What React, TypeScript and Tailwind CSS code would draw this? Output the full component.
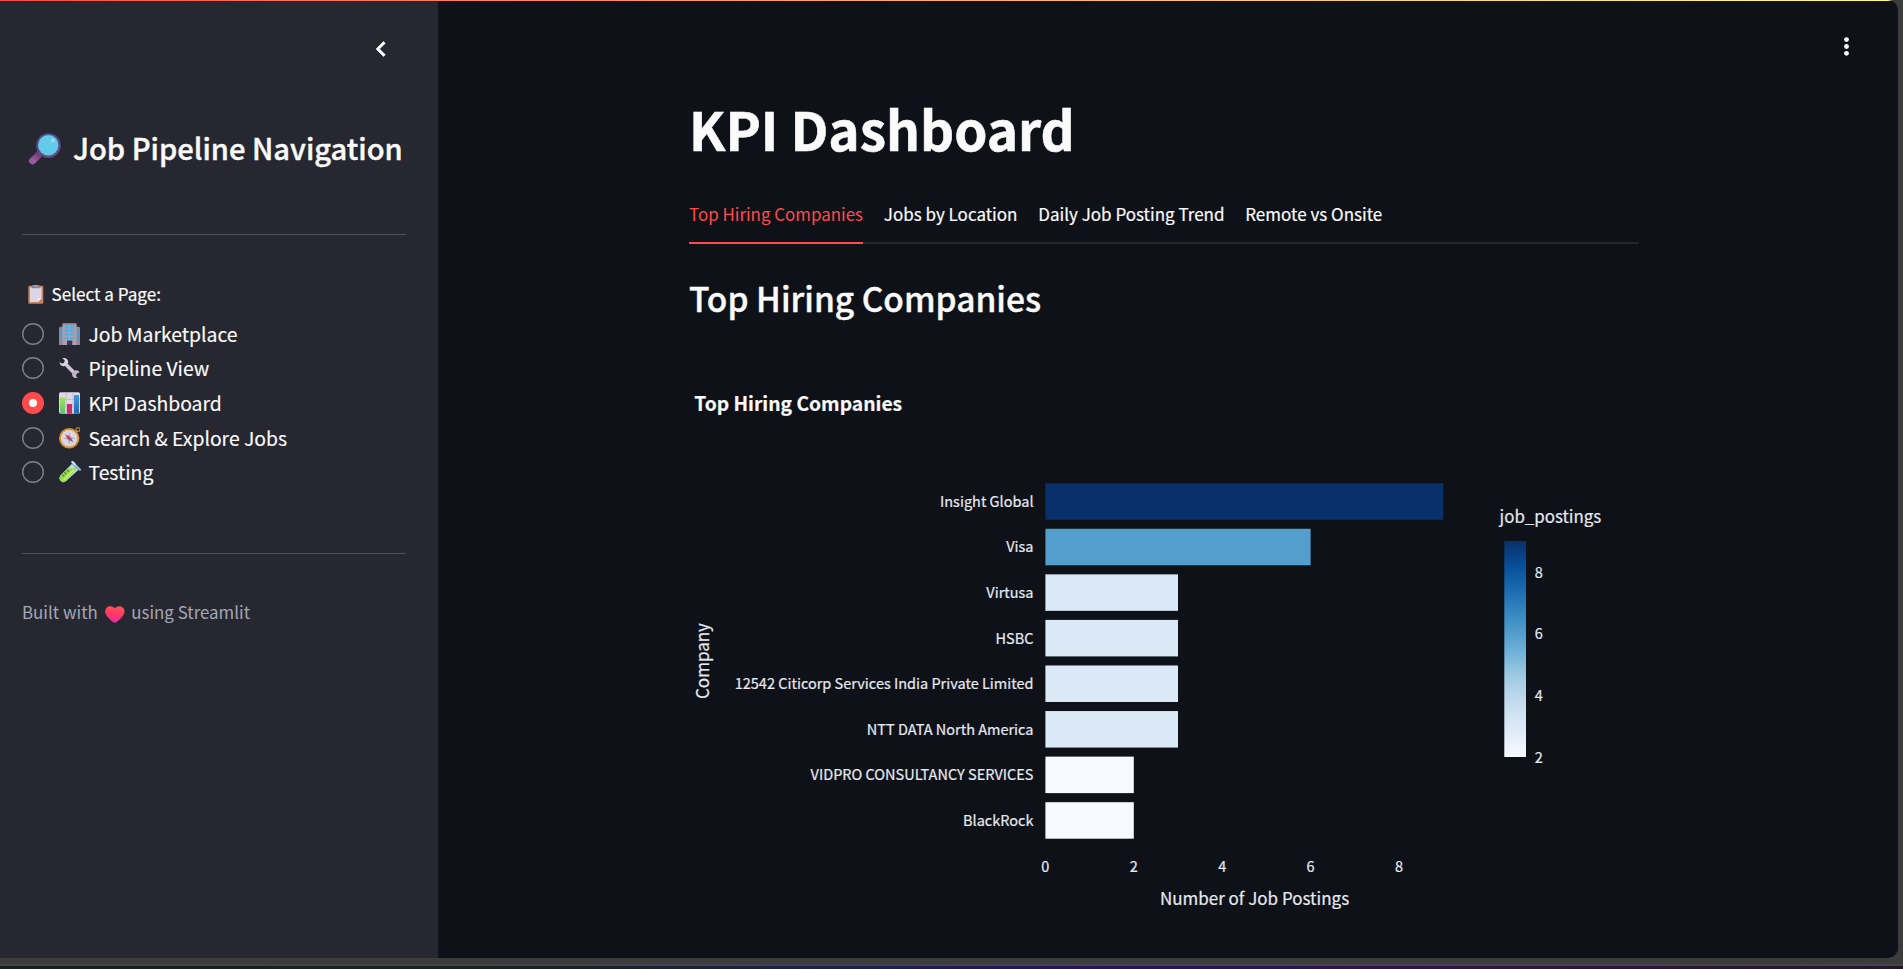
import type { ReactNode } from "react";

/* ---------- Icons ---------- */

function MagnifierIcon() {
  return (
    <svg viewBox="0 0 32 32" className="size-8 shrink-0">
      <defs>
        <linearGradient id="rim" x1="0" y1="0" x2="0" y2="1">
          <stop offset="0" stopColor="#3f5590" />
          <stop offset="1" stopColor="#6d4583" />
        </linearGradient>
        <linearGradient id="handle" x1="0.8" y1="0" x2="0.3" y2="1">
          <stop offset="0" stopColor="#6f3f78" />
          <stop offset="1" stopColor="#9a5b9d" />
        </linearGradient>
      </defs>
      <path d="M10.3 21.2 3.6 27.9" stroke="url(#handle)" strokeWidth="7" strokeLinecap="round" />
      <circle cx="19.5" cy="12.5" r="12.3" fill="url(#rim)" />
      <circle cx="19.3" cy="12.3" r="10.2" fill="#62cbe9" />
      <circle cx="23.8" cy="7.5" r="1.9" fill="#a9d4f0" />
    </svg>
  );
}

function ClipboardIcon() {
  return (
    <svg viewBox="0 0 16 19" className="h-[19px] w-4 shrink-0">
      <rect x="0.3" y="0.8" width="15" height="18" rx="1.2" fill="#c9835c" />
      <path d="M2 2.6h11.6v10.6l-3.8 3.9H2z" fill="#dcd5e6" />
      <path d="M9.8 17.1v-3.2q0-.7.7-.7h3.1z" fill="#f3eef8" />
      <path d="M4 .8Q4 0 5 0h5.6q1 0 1 .8v2.4H4z" fill="#8a7f93" />
      <rect x="5.6" y="0.2" width="4.4" height="1.4" fill="#b0a5ba" />
    </svg>
  );
}

function OfficeIcon() {
  return (
    <svg viewBox="0 0 21 22" className="h-[22px] w-[21px] shrink-0">
      <path d="M0 5.2q0-1.5 1.5-1.5H5V22H0zM16 3.7h3.5Q21 3.7 21 5.200V22H16z" fill="#8f8a9b" />
      <path d="M3.4 1.6Q3.4 0 5 0h11q1.6 0 1.6 1.6V22H3.4z" fill="#a7a1b1" />
      <path d="M3.4 1.6Q3.4 0 5 0h11q1.6 0 1.6 1.6z" fill="#827b8c" />
      <path
        d="M5.7 2.8h4v2.400h-4zM11 2.800h4v2.400h-4zM5.700 6.500h4v2.400h-4zM11 6.500h4v2.400h-4zM5.700 10.200h4v2.400h-4zM11 10.200h4v2.400h-4zM5.700 13.900h4v2.400h-4zM11 13.900h4v2.400h-4z"
        fill="#3fb4f5"
      />
      <path
        d="M1 6.800h1.900v2.200H1zM1 10.400h1.900v2.200H1zM1 14h1.900v2.200H1zM18.200 6.800h1.900v2.200h-1.900zM18.200 10.400h1.900v2.200h-1.900zM18.200 14h1.900v2.200h-1.900z"
        fill="#35a5e6"
      />
      <path d="M8 17.600h5.200V22H8z" fill="#43354f" />
    </svg>
  );
}

function WrenchIcon() {
  return (
    <svg viewBox="0 0 21 22" className="h-[22px] w-[21px] shrink-0">
      <path d="M6.500 7 14.600 15.200" stroke="#cfc5d8" strokeWidth="3.700" />
      <path
        d="M3.400 1.200 5.800 3.600 4.900 6 2.300 6.600.6 4.700C.4 8 2.800 9.800 6 9.100L9.200 6C9.600 3 7.400.4 3.400 1.200Z"
        fill="#d9d0e0"
      />
      <path
        d="M20.400 15.800 18.700 16 17 17.700l.4 2 1.200 1.100c-3.200.8-6-1-5.500-4.300l2.700-3.100c2.300-.5 4.300.2 4.600 2.400Z"
        fill="#bfb5ca"
      />
    </svg>
  );
}

function BarChartIcon() {
  return (
    <svg viewBox="0 0 21 22" className="h-[22px] w-[21px] shrink-0">
      <defs>
        <linearGradient id="barGreen" x1="0" y1="0" x2="0" y2="1">
          <stop offset="0" stopColor="#a8e05d" />
          <stop offset="1" stopColor="#5cc277" />
        </linearGradient>
        <linearGradient id="barBlue" x1="0" y1="0" x2="0" y2="1">
          <stop offset="0" stopColor="#3c9ae6" />
          <stop offset="1" stopColor="#2568b8" />
        </linearGradient>
      </defs>
      <rect y="0.300" width="21" height="21.400" rx="1.600" fill="#dfdae6" />
      <path d="M7.200 0v22M14 0v22M0 7.400h21M0 14.600h21" stroke="#b8b0c3" strokeWidth="0.700" />
      <rect x="1" y="5.400" width="5" height="16.300" fill="url(#barGreen)" />
      <rect x="8" y="12" width="5" height="9.700" fill="#d22b68" />
      <rect x="15" y="3" width="5" height="18.700" fill="url(#barBlue)" />
    </svg>
  );
}

function CompassIcon() {
  return (
    <svg viewBox="0 0 21 22" className="h-[22px] w-[21px] shrink-0">
      <circle cx="18.900" cy="2.600" r="1.900" fill="none" stroke="#b87e28" strokeWidth="1.200" />
      <path d="m15.600 6 2.400-2.400" stroke="#d99a2e" strokeWidth="2" />
      <circle cx="10.200" cy="11.300" r="10.200" fill="#d4922d" />
      <circle cx="10.200" cy="11.300" r="8.300" fill="#ddd5e2" />
      <path d="m10.200 4.900 1.100 5.300 5.300 1.100-5.300 1.100-1.100 5.300-1.100-5.300-5.300-1.100 5.300-1.100z" fill="#aaa1b3" />
      <path d="m6 7.300 5.400 2.600-2.300 2.500z" fill="#dc2e62" />
      <path d="m14.600 15.400-5.500-3 2.300-2.500z" fill="#6f6878" />
    </svg>
  );
}

function TestTubeIcon() {
  return (
    <svg viewBox="0 0 22 22" className="h-[22px] w-[22px] shrink-0">
      <path d="M13 2.800 19.300 9 7.200 20.100Q4.600 22.400 1.700 20 -.6 17.200 1.700 14.300Z" fill="#b9dcf0" />
      <path d="M9 7.300h9L7.200 20.100Q4.600 22.400 1.700 20 -.6 17.200 1.700 14.300Z" fill="#98d94c" />
      <path d="M14.200 9.400 5 18.600" stroke="#c4ef72" strokeWidth="2" strokeLinecap="round" />
      <path d="m5.300 11.300 2 1.900M3.200 13.500l2 1.900M8 9l2 1.900" stroke="#3d8f3c" strokeWidth="1.200" />
      <path d="M13.300 1.100 20.900 8.700" stroke="#8fc3e8" strokeWidth="2.200" strokeLinecap="round" />
      <path d="M13.600.9 16 3.300" stroke="#c9e6f8" strokeWidth="1.800" strokeLinecap="round" />
    </svg>
  );
}

function HeartIcon() {
  return (
    <svg viewBox="0 0 20 17" className="h-[17px] w-5 shrink-0">
      <defs>
        <linearGradient id="heart" x1="0.600" y1="0" x2="0.400" y2="1">
          <stop offset="0" stopColor="#ff5355" />
          <stop offset="0.550" stopColor="#fb3668" />
          <stop offset="1" stopColor="#ee2bb0" />
        </linearGradient>
      </defs>
      <path
        d="M9.800 2.200C7.700-.4 3.400-.5 1.300 1.900-.6 4.200-.1 7.500 1.700 10c1.900 2.600 4.500 4.600 6.700 6.200q1.400.9 2.800 0c2.200-1.600 4.800-3.600 6.700-6.200 1.800-2.500 2.300-5.800.4-8.100-2.100-2.400-6.400-2.300-8.500.3Z"
        fill="url(#heart)"
      />
    </svg>
  );
}

/* ---------- Sidebar ---------- */

const pages: { label: string; icon: ReactNode; selected?: boolean }[] = [
  { label: "Job Marketplace", icon: <OfficeIcon /> },
  { label: "Pipeline View", icon: <WrenchIcon /> },
  { label: "KPI Dashboard", icon: <BarChartIcon />, selected: true },
  { label: "Search & Explore Jobs", icon: <CompassIcon /> },
  { label: "Testing", icon: <TestTubeIcon /> },
];

function Radio({ selected }: { selected?: boolean }) {
  return selected ? (
    <span className="flex size-[22px] shrink-0 items-center justify-center rounded-full bg-[#ff4b4b]">
      <span className="size-2 rounded-full bg-[#fafafa]" />
    </span>
  ) : (
    <span className="size-[22px] shrink-0 rounded-full shadow-[inset_0_0_0_1.4px_#808187]" />
  );
}

function Sidebar() {
  return (
    <aside className="flex w-[438px] shrink-0 flex-col bg-[#262730] pl-[22px]">
      <div className="flex justify-end pt-[33px] pr-[42px]">
        <svg viewBox="0 0 24 24" className="size-[30px]">
          <path d="M15.410 7.410 14 6l-6 6 6 6 1.410-1.410L10.830 12z" fill="#fafafa" stroke="#fafafa" strokeWidth="0.500" />
        </svg>
      </div>

      <div className="mt-[65px] flex h-9 items-center pl-[7px]">
        <span className="mt-1">
          <MagnifierIcon />
        </span>
        <h2 className="ml-3 text-[29.1px] leading-9 font-medium whitespace-nowrap text-[#fafafa] [-webkit-text-stroke:0.4px_#fafafa]">
          Job Pipeline Navigation
        </h2>
      </div>

      <hr className="mt-[69px] w-96 border-[#50515a]" />

      <div className="mt-[47px] flex h-6 items-center">
        <span className="ml-1.5">
          <ClipboardIcon />
        </span>
        <span className="ml-[7.5px] text-[17.1px] leading-6 text-[#fafafa] [-webkit-text-stroke:0.2px_#fafafa]">
          Select a Page:
        </span>
      </div>

      <ul className="mt-[10.500px] flex flex-col">
        {pages.map((p) => (
          <li key={p.label} className="flex h-[34.6px] items-center">
            <Radio selected={p.selected} />
            <span className="ml-[15px] flex w-[22px]">{p.icon}</span>
            <span className="ml-[7.5px] text-[19.35px] leading-8 text-[#fafafa] [-webkit-text-stroke:0.15px_#fafafa]">
              {p.label}
            </span>
          </li>
        ))}
      </ul>

      <hr className="mt-[64px] w-96 border-[#50515a]" />

      <div className="mt-[46px] flex h-6 items-center text-[16.9px] leading-6 text-[#a3a8b4]">
        <span>Built with</span>
        <span className="mt-1 ml-[7.5px]">
          <HeartIcon />
        </span>
        <span className="ml-1.5">using Streamlit</span>
      </div>
    </aside>
  );
}

/* ---------- Chart ---------- */

const companies = [
  { name: "Insight Global", value: 9, color: "#08306b" },
  { name: "Visa", value: 6, color: "#549ecd" },
  { name: "Virtusa", value: 3, color: "#dbe9f6" },
  { name: "HSBC", value: 3, color: "#dbe9f6" },
  { name: "12542 Citicorp Services India Private Limited", value: 3, color: "#dbe9f6" },
  { name: "NTT DATA North America", value: 3, color: "#dbe9f6" },
  { name: "VIDPRO CONSULTANCY SERVICES", value: 2, color: "#f7fbff" },
  { name: "BlackRock", value: 2, color: "#f7fbff" },
];

const blues = ["#08306b", "#08519c", "#2171b5", "#4292c6", "#6baed6", "#9ecae1", "#c6dbef", "#deebf7", "#f7fbff"];

const X0 = 356.4;
const UNIT = 44.2;
const Y0 = 165.2;
const PITCH = 45.57;

function Chart() {
  return (
    <svg
      viewBox="0 0 950 640"
      className="block h-[640px] w-[950px] fill-[#e6eaf1] [&_text]:stroke-[#e6eaf1] [&_text]:stroke-[0.2px]"
    >
      <defs>
        <linearGradient id="scale" x1="0" y1="0" x2="0" y2="1">
          {blues.map((c, i) => (
            <stop key={c} offset={i / 8} stopColor={c} />
          ))}
        </linearGradient>
      </defs>

      <text x="5.200" y="93" className="fill-[#fafafa] text-[19.28px] font-bold">
        Top Hiring Companies
      </text>

      {companies.map((c, i) => (
        <g key={c.name}>
          <rect x={X0} y={Y0 + i * PITCH} width={c.value * UNIT} height="36.5" fill={c.color} />
          <text x="344.5" y={Math.round(188.800 + i * PITCH)} textAnchor="end" className="text-[14.5px]">
            {c.name}
          </text>
        </g>
      ))}

      {[0, 2, 4, 6, 8].map((n) => (
        <text key={n} x={X0 + n * UNIT} y="554" textAnchor="middle" className="text-[14.5px]">
          {n}
        </text>
      ))}

      <text x="565.5" y="587" textAnchor="middle" className="text-[17px]">
        Number of Job Postings
      </text>
      <text transform="translate(19.500 343) rotate(-90)" textAnchor="middle" className="text-[17px]">
        Company
      </text>

      <text x="810.5" y="205" className="text-[16.9px]">
        job_postings
      </text>
      <rect x="815.3" y="223" width="21.7" height="216" fill="url(#scale)" />
      {[8, 6, 4, 2].map((n) => (
        <text key={n} x="845.8" y={Math.round(444.8 - (n - 2) * 30.85)} className="text-[14.5px]">
          {n}
        </text>
      ))}
    </svg>
  );
}

/* ---------- Main ---------- */

const tabs = ["Jobs by Location", "Daily Job Posting Trend", "Remote vs Onsite"];

function Main() {
  return (
    <main className="flex flex-1 items-start justify-between">
      <div className="ml-[251px] w-[950px] pt-[95px]">
        <h1 className="text-[53.1px] leading-16 font-bold whitespace-nowrap text-[#fafafa] [-webkit-text-stroke:0.6px_#fafafa]">
          KPI Dashboard
        </h1>

        <nav className="mt-[26px] flex h-[58px] gap-[20.8px] border-b-2 border-[#26272c] text-[17px] whitespace-nowrap text-[#fafafa]">
          <span className="-mb-0.5 flex items-center border-b-2 border-[#ff4b4b] text-[16.93px] text-[#ff4b4b]">
            Top Hiring Companies
          </span>
          {tabs.map((t) => (
            <span key={t} className="flex items-center [-webkit-text-stroke:0.2px_#fafafa]">
              {t}
            </span>
          ))}
        </nav>

        <h2 className="mt-[34px] text-[33.5px] leading-10 font-medium text-[#fafafa] [-webkit-text-stroke:0.4px_#fafafa]">
          Top Hiring Companies
        </h2>
        <Chart />
      </div>
      <svg viewBox="0 0 30 30" className="mt-[31px] mr-[37px] size-[30px] fill-[#fafafa]">
        <circle cx="15.5" cy="7.6" r="2.4" />
        <circle cx="15.5" cy="14.5" r="2.4" />
        <circle cx="15.5" cy="21.3" r="2.4" />
      </svg>
    </main>
  );
}

export default function App() {
  return (
    <div className="flex h-[969px] w-[1903px] flex-col overflow-hidden bg-[#3c3c3c] font-['Noto_Sans_CJK_SC','Noto_Sans',sans-serif]">
      <div className="flex h-[958px] w-[1898px] shrink-0 flex-col overflow-hidden rounded-r-[10px] bg-[#0e1117]">
        <div className="h-px shrink-0 bg-linear-to-r from-[#ff4b4b] to-[#fffd80]" />
        <div className="flex h-[957px]">
          <Sidebar />
          <Main />
        </div>
      </div>
      <div className="mt-1.5 h-0.5 shrink-0 bg-linear-to-r from-[#434645] via-[#424250] to-[#474349]" />
      <div className="h-[3px] shrink-0 bg-[linear-gradient(to_right,#16211d_0%,#18221f_28%,#1a2448_42%,#29125f_57%,#32143f_78%,#25172a_100%)]" />
    </div>
  );
}
